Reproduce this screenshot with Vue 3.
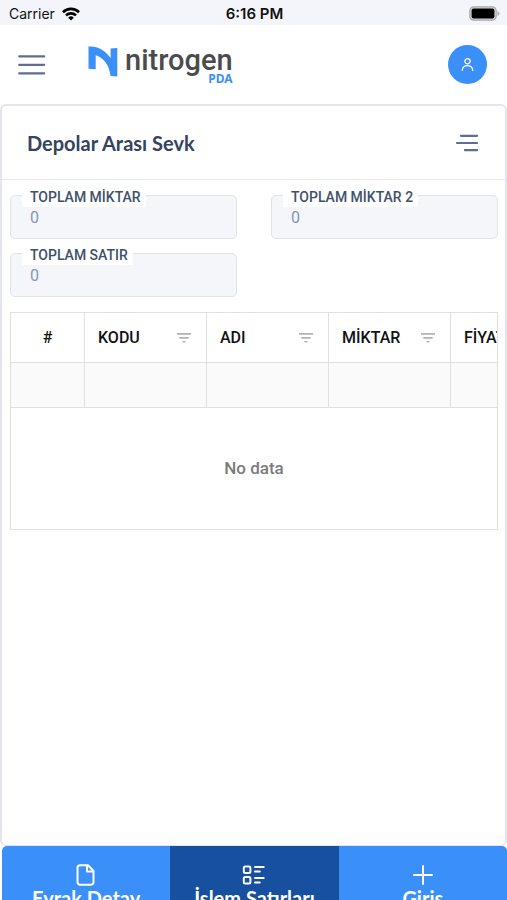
<script setup>
const totals = [
  { id: 'total-qty', label: 'TOPLAM MİKTAR', value: '0' },
  { id: 'total-qty-2', label: 'TOPLAM MİKTAR 2', value: '0' },
  { id: 'total-rows', label: 'TOPLAM SATIR', value: '0' },
]
const columns = ['KODU', 'ADI', 'MİKTAR', 'FİYAT']
</script>

<template>
  <div class="screen">
    <div class="status">
      <div class="carrier">
        <span>Carrier</span>
        <svg width="18" height="14" viewBox="0 0 18 14" fill="none" stroke="#000" stroke-width="2.6" aria-hidden="true">
          <path d="M1 5.2a11.4 11.4 0 0 1 16 0" />
          <path d="M4 8.4a7.2 7.2 0 0 1 10 0" />
          <path d="M9 13.6 6.2 10.7a4 4 0 0 1 5.6 0z" fill="#000" stroke="none" />
        </svg>
      </div>
      <span class="clock">6:16 PM</span>
      <svg class="battery" width="31" height="15" viewBox="0 0 31 15" aria-hidden="true">
        <rect x="0.8" y="0.8" width="26.4" height="13.4" rx="4" fill="#d4d4d6" stroke="#aaaaad" stroke-width="1.2" />
        <rect x="2.6" y="2.6" width="22.8" height="9.8" rx="2" fill="#000" />
        <path d="M28.5 5q2 1 2 2.500t-2 2.500z" fill="#aaaaad" />
      </svg>
    </div>

    <header class="topbar">
      <button class="icon-button" type="button" aria-label="Menü">
        <svg width="28" height="22" viewBox="0 0 28 22" stroke="#5d6d93" stroke-width="2.2" stroke-linecap="round" aria-hidden="true">
          <path d="M1.200 2.300h25M1.200 10.800h25M1.200 19.300h25" />
        </svg>
      </button>
      <a class="logo" href="#" aria-label="nitrogen PDA">
        <svg width="30" height="32" viewBox="0 0 30 32" fill="#3b8ff8" aria-hidden="true">
          <path d="M.5.600C9 -.300 17 4 22.600 12V2.600L29.300 2V30.600L22.600 30C21.500 20 16.500 12 7.700 9.200V23.200L.5 22.800z" />
        </svg>
        <span class="wordmark">
          <span class="name">nitrogen</span>
          <span class="product">PDA</span>
        </span>
      </a>
      <button class="avatar" type="button" aria-label="Profil">
        <svg width="14" height="14" viewBox="0 0 14 14" fill="none" stroke="#fff" stroke-width="1.3" stroke-linecap="round" aria-hidden="true">
          <circle cx="6.500" cy="3.300" r="2.600" />
          <path d="M1.200 12.300c.4-3 2.600-4.700 5.300-4.700s4.900 1.700 5.300 4.700" />
        </svg>
      </button>
    </header>

    <main class="card">
      <div class="card-head">
        <h1>Depolar Arası Sevk</h1>
        <button class="icon-button" type="button" aria-label="Seçenekler">
          <svg width="24" height="20" viewBox="0 0 24 20" stroke="#5d6d93" stroke-width="2.200" stroke-linecap="round" aria-hidden="true">
            <path d="M6 2.800h16M2 10h20M10 17.200h12" />
          </svg>
        </button>
      </div>

      <div class="card-body">
        <div class="totals">
          <div v-for="t in totals" :key="t.id" class="field">
            <label :for="t.id">{{ t.label }}</label>
            <input :id="t.id" type="text" :value="t.value" readonly />
          </div>
        </div>

        <div class="grid">
          <table>
            <thead>
              <tr>
                <th class="index" scope="col">#</th>
                <th v-for="c in columns" :key="c" scope="col">
                  <div class="head-cell">
                    <span>{{ c }}</span>
                    <svg width="14" height="10" viewBox="0 0 14 10" fill="#b3b3b3" aria-hidden="true">
                      <path d="M0 0h14v1.700H0zM2.300 4h9.400v1.700H2.300zM5.500 8h3v1.600h-3z" />
                    </svg>
                  </div>
                </th>
              </tr>
            </thead>
            <tbody>
              <tr>
                <td></td>
                <td v-for="c in columns" :key="c"></td>
              </tr>
            </tbody>
          </table>
          <p class="empty">No data</p>
        </div>
      </div>
    </main>

    <nav class="tabs">
      <button class="tab" type="button">
        <svg width="24" height="24" viewBox="0 0 24 24" fill="none" stroke="#fff" stroke-width="2" stroke-linejoin="round" aria-hidden="true">
          <path d="M14 2.200H6a2.500 2.500 0 0 0-2.500 2.500v14.600a2.500 2.500 0 0 0 2.500 2.500h11a2.500 2.500 0 0 0 2.500-2.500V8z" />
          <path d="M13 2.500V8.500H19.500" />
        </svg>
        <span>Evrak Detay</span>
      </button>
      <button class="tab active" type="button">
        <svg width="24" height="24" viewBox="0 0 24 24" fill="none" stroke="#fff" stroke-width="2" stroke-linecap="round" aria-hidden="true">
          <rect x="1.800" y="3.400" width="6.600" height="6.600" rx="1.500" />
          <rect x="1.800" y="14" width="6.600" height="6.600" rx="1.500" />
          <path d="M13 4h8.700M13 8.400h4.800M13 15h8.700M13 19.500h4.800" />
        </svg>
        <span>İşlem Satırları</span>
      </button>
      <button class="tab" type="button">
        <svg width="24" height="24" viewBox="0 0 24 24" stroke="#fff" stroke-width="2" stroke-linecap="round" aria-hidden="true">
          <path d="M12 3v18M3 12h18" />
        </svg>
        <span>Giriş</span>
      </button>
    </nav>
  </div>
</template>

<style>
body {
  margin: 0;
  background: #fff;
}
</style>

<style scoped>
* {
  box-sizing: border-box;
}
.screen {
  display: flex;
  flex-direction: column;
  height: 100vh;
  overflow: hidden;
  background: #fff;
  font-family: Roboto, sans-serif;
}
button {
  border: 0;
  padding: 0;
  background: none;
  cursor: pointer;
}
svg {
  display: block;
}
.status {
  display: grid;
  grid-template-columns: 1fr auto 1fr;
  align-items: center;
  height: 25px;
  padding: 2px 7px 0 9px;
  background: #f4f5fa;
  color: #111;
  font: 14px/20px Inter, sans-serif;
}
.carrier {
  display: flex;
  align-items: center;
  gap: 7px;
}
.clock {
  font-size: 15px;
  font-weight: 600;
}
.battery {
  justify-self: end;
}
.topbar {
  display: flex;
  align-items: center;
  height: 79px;
  padding: 0 20px 0 18px;
}
.logo {
  display: flex;
  align-items: flex-start;
  gap: 7px;
  margin-left: 42px;
  text-decoration: none;
}
.wordmark {
  display: flex;
  flex-direction: column;
  align-items: flex-end;
}
.name {
  color: #4b4b4d;
  font-size: 29px;
  font-weight: 500;
  line-height: 28px;
}
.product {
  color: #3b8ff8;
  font: 700 12px/10px "Noto Sans", sans-serif;
}
.avatar {
  display: flex;
  align-items: center;
  justify-content: center;
  width: 39px;
  height: 39px;
  margin-left: auto;
  border-radius: 50%;
  background: #3b8ff8;
}
.card {
  flex: 1;
  min-height: 0;
  border: 2px solid #e4e5f0;
  border-bottom-width: 1px;
  border-radius: 6px;
}
.card-head {
  display: flex;
  align-items: center;
  justify-content: space-between;
  height: 74px;
  padding: 0 26px 0 25px;
  border-bottom: 1px solid #e6e8f0;
}
h1 {
  margin: 0;
  color: #34435e;
  font: 700 20px/24px Lato, sans-serif;
}
.card-body {
  padding: 15px 7px 0 8px;
}
.totals {
  display: grid;
  grid-template-columns: 1fr 1fr;
  gap: 14px 34px;
}
.field {
  position: relative;
}
.field label {
  position: absolute;
  top: -7px;
  left: 12px;
  padding: 0 5px 0 8px;
  background: #fff;
  color: #405069;
  font-size: 14px;
  font-weight: 500;
  line-height: 19px;
}
.field input {
  display: block;
  width: 100%;
  height: 44px;
  padding: 0 19px;
  border: 1px solid #e0e3ed;
  border-radius: 5px;
  background: #f5f6fa;
  color: #8595bd;
  font: 16px/20px Roboto, sans-serif;
  outline: none;
}
.grid {
  margin-top: 15px;
  overflow: hidden;
  border: 1px solid #e0e0e0;
}
table {
  width: 561px;
  table-layout: fixed;
  border-spacing: 0;
}
th,
td {
  padding: 0;
  border-bottom: 1px solid #e0e0e0;
}
th + th,
td + td {
  border-left: 1px solid #e0e0e0;
}
th {
  height: 50px;
  color: #111;
  font-size: 16px;
  font-weight: 500;
}
.index {
  width: 73px;
}
.head-cell {
  display: flex;
  align-items: center;
  justify-content: space-between;
  padding: 0 15px 0 13px;
}
td {
  height: 45px;
  background: #fafafa;
}
.empty {
  margin: 0;
  color: #7b7b7b;
  font-size: 17px;
  font-weight: 500;
  line-height: 121px;
  text-align: center;
}
.tabs {
  display: grid;
  grid-template-columns: repeat(3, 1fr);
  flex: none;
  height: 54px;
  margin: 0 0 0 2px;
  overflow: hidden;
  border-radius: 5px 5px 0 0;
}
.tab {
  display: flex;
  flex-direction: column;
  align-items: center;
  height: 72px;
  padding-top: 17px;
  background: #3b8ff8;
  color: #fff;
  font: 700 20px/22px Lato, sans-serif;
}
.tab.active {
  background: #17509f;
}
</style>
